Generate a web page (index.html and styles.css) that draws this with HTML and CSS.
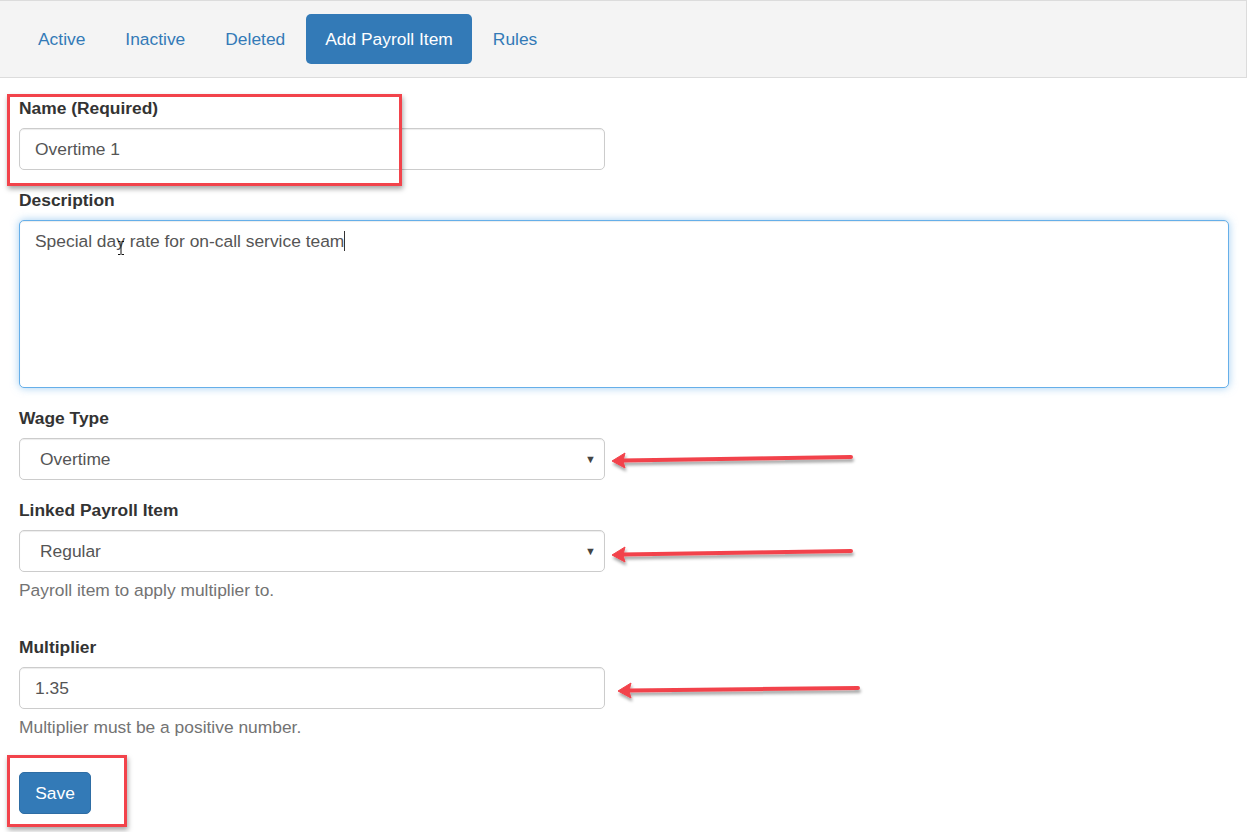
FILE: index.html
```html
<!DOCTYPE html>
<html>
<head>
<meta charset="utf-8">
<link rel="stylesheet" href="styles.css">
</head>
<body>
<div class="page">
  <nav class="tabs">
    <ul class="pills">
      <li><a class="pill">Active</a></li>
      <li><a class="pill">Inactive</a></li>
      <li><a class="pill">Deleted</a></li>
      <li><a class="pill active">Add Payroll Item</a></li>
      <li><a class="pill">Rules</a></li>
    </ul>
  </nav>
  <form class="form">
    <div class="group">
      <label class="label">Name (Required)</label>
      <div class="control half">Overtime 1</div>
    </div>
    <div class="group">
      <label class="label">Description</label>
      <div class="control area"><span>Special day rate for on-call service team</span><span class="caret"></span></div>
    </div>
    <div class="group">
      <label class="label">Wage Type</label>
      <div class="control half select"><span>Overtime</span><span class="arrow">▼</span></div>
    </div>
    <div class="group">
      <label class="label">Linked Payroll Item</label>
      <div class="control half select"><span>Regular</span><span class="arrow">▼</span></div>
      <p class="help">Payroll item to apply multiplier to.</p>
    </div>
    <div class="group">
      <label class="label">Multiplier</label>
      <div class="control half">1.35</div>
      <p class="help">Multiplier must be a positive number.</p>
    </div>
    <div class="actions">
      <button type="button" class="btn">Save</button>
    </div>
  </form>

  <div class="mark mark-name"></div>
  <div class="mark mark-save"></div>

  <svg class="ibeam" width="8" height="14" viewBox="0 0 8 14">
    <path d="M1 0.5h2.5M4.5 0.5h2.5M4 1v12M1 13.5h2.5M4.5 13.5h2.5" stroke="#111" stroke-width="1" fill="none"/>
  </svg>

  <svg class="arrows" width="1248" height="832" viewBox="0 0 1248 832">
    <defs>
      <filter id="sh" x="-10%" y="-100%" width="120%" height="300%">
        <feDropShadow dx="1" dy="3" stdDeviation="1.6" flood-color="#000" flood-opacity="0.35"/>
      </filter>
    </defs>
    <g filter="url(#sh)" fill="#f2434b" stroke="#f2434b">
      <line x1="851" y1="457" x2="622" y2="460.5" stroke-width="4" stroke-linecap="round"/>
      <polygon points="612,461 625,453 623,461 625,468" stroke-width="1" stroke-linejoin="round"/>
      <line x1="851" y1="551" x2="622" y2="554.5" stroke-width="4" stroke-linecap="round"/>
      <polygon points="612,555 625,547 623,555 625,562" stroke-width="1" stroke-linejoin="round"/>
      <line x1="858" y1="688" x2="628" y2="690.5" stroke-width="4" stroke-linecap="round"/>
      <polygon points="618,691 631,683 629,691 631,698" stroke-width="1" stroke-linejoin="round"/>
    </g>
  </svg>
</div>
</body>
</html>
```
FILE: styles.css
```css
* { box-sizing: border-box; }
html, body { margin: 0; padding: 0; background: #fff; }
body {
  font-family: "Liberation Sans", Arial, Helvetica, sans-serif;
  font-size: 17.4px;
  color: #333;
}
.page { position: relative; width: 1248px; height: 832px; overflow: hidden; }

.tabs {
  width: 1247px;
  height: 78px;
  background: #f4f4f4;
  border-top: 1px solid #dcdcdc;
  border-right: 1px solid #dcdcdc;
  border-bottom: 1px solid #dcdcdc;
  padding-top: 13px;
}
.pills { list-style: none; margin: 0; padding: 0 0 0 19px; display: flex; gap: 2px; }
.pill {
  display: block;
  height: 50px;
  line-height: 50px;
  padding: 0 19px;
  border-radius: 5px;
  color: #337ab7;
  text-decoration: none;
}
.pill.active { background: #337ab7; color: #fff; }

.form { padding: 18px 19px 0 19px; }
.group { margin-bottom: 18px; display: flow-root; }
.label { display: block; font-weight: bold; line-height: 24px; margin-bottom: 8px; color: #333; }
.control {
  height: 42px;
  border: 1px solid #ccc;
  border-radius: 5px;
  padding: 0 15px;
  line-height: 40px;
  color: #555;
  background: #fff;
  box-shadow: inset 0 1px 1px rgba(0,0,0,.075);
}
.half { width: 586px; }
.area {
  height: 168px;
  border-color: #66afe9;
  line-height: 24px;
  padding-top: 8px;
  box-shadow: inset 0 1px 1px rgba(0,0,0,.075), 0 0 8px rgba(102,175,233,.6);
}
.caret { display: inline-block; width: 1px; height: 20px; background: #333; vertical-align: -4px; margin-left: 0; }
.select { display: flex; justify-content: space-between; padding-left: 20px; padding-right: 8px; }
.arrow { font-size: 11px; color: #444; line-height: 40px; }
.help { margin: 6px 0 15px 0; line-height: 24px; color: #737373; }

.btn {
  font-family: inherit;
  font-size: 17.4px;
  width: 72px;
  height: 42px;
  background: #337ab7;
  border: 1px solid #2e6da4;
  border-radius: 5px;
  color: #fff;
  padding: 0;
}

.mark {
  position: absolute;
  border: 3px solid #f2434b;
  box-shadow: 1px 3px 5px rgba(0,0,0,.35);
}
.mark-name { left: 7px; top: 94px; width: 395px; height: 92px; }
.mark-save { left: 7px; top: 755px; width: 120px; height: 72px; }

.ibeam { position: absolute; left: 117px; top: 241px; }
.arrows { position: absolute; left: 0; top: 0; pointer-events: none; }
```
